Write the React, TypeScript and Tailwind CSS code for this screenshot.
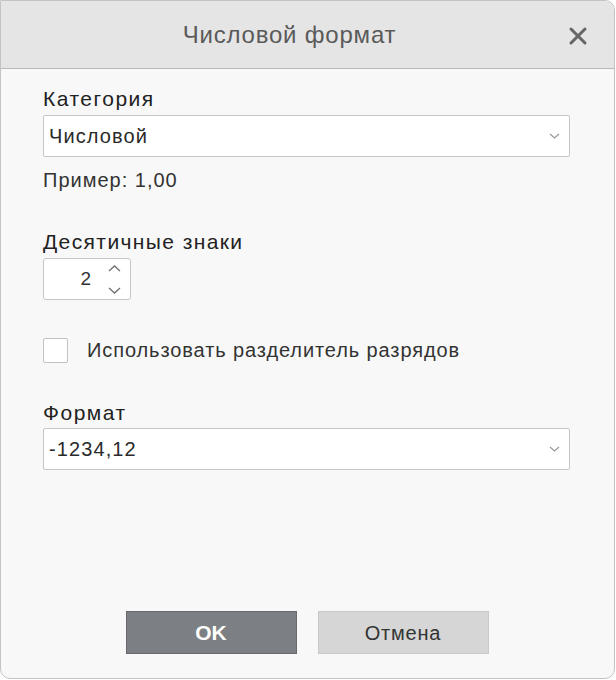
import { X } from "lucide-react";

const font = { fontFamily: '"Liberation Sans", Arial, sans-serif' };

function Chevron({ up = false, w = 10, h = 6, color = "#9a9a9a" }: { up?: boolean; w?: number; h?: number; color?: string }) {
  return (
    <svg width={w} height={h} viewBox={`0 0 ${w} ${h}`} fill="none" style={{ display: "block" }}>
      <path
        d={up ? `M1 ${h - 1}L${w / 2} 1L${w - 1} ${h - 1}` : `M1 1L${w / 2} ${h - 1}L${w - 1} 1`}
        stroke={color}
        strokeWidth="1.3"
      />
    </svg>
  );
}

function SelectBox({ value }: { value: string }) {
  return (
    <div className="flex h-[42px] w-[527px] items-center justify-between rounded-[2px] border border-[#c6c6c6] bg-white pl-[5px] pr-[9px]">
      <span className="text-[20px] tracking-[1.1px] text-[#2a2a2a]">{value}</span>
      <Chevron w={11} h={6} />
    </div>
  );
}

export default function App() {
  return (
    <div className="h-[680px] w-[616px] bg-white" style={font}>
      <div className="flex h-[679px] w-[615px] flex-col overflow-hidden rounded-b-[10px] rounded-tr-[10px] border border-[#c4c4c4] bg-[#f8f8f8]">
        {/* header */}
        <div className="relative flex h-[68px] shrink-0 items-center justify-center border-b border-[#b9b9b9] bg-[#e5e5e5] pr-[36px]">
          <span className="text-[24px] tracking-[0.8px] text-[#5a5a5a]">Числовой формат</span>
          <X size={28} strokeWidth={2.6} className="absolute right-[22px] top-[21px] text-[#666]" />
        </div>

        {/* body */}
        <div className="flex flex-1 flex-col pl-[42px] pt-[18px]">
          <div className="text-[21px] leading-[23px] tracking-[1.5px] text-[#222]">Категория</div>
          <div className="mt-[5px]">
            <SelectBox value="Числовой" />
          </div>
          <div className="mt-[12px] text-[20px] leading-[23px] tracking-[1px] text-[#333]">Пример: 1,00</div>

          <div className="mt-[38px] text-[21px] leading-[23px] tracking-[1.4px] text-[#222]">Десятичные знаки</div>
          <div className="mt-[5px] flex h-[42px] w-[88px] items-center justify-end rounded-[3px] border border-[#c6c6c6] bg-white pr-[9px]">
            <span className="mr-[17px] text-[19px] text-[#333]">2</span>
            <div className="flex flex-col items-center gap-[15px]">
              <Chevron up w={13} h={7} color="#707070" />
              <Chevron w={13} h={7} color="#707070" />
            </div>
          </div>

          <div className="mt-[35px] flex items-center">
            <div className="h-[25px] w-[25px] rounded-[2px] border border-[#c2c2c2] bg-white" />
            <span className="ml-[19px] text-[20px] tracking-[0.9px] text-[#333]">Использовать разделитель разрядов</span>
          </div>

          <div className="mt-[36px] text-[21px] leading-[23px] tracking-[1.5px] text-[#222]">Формат</div>
          <div className="mt-[4px]">
            <SelectBox value="-1234,12" />
          </div>
        </div>

        {/* footer */}
        <div className="flex h-[67px] shrink-0 justify-center gap-[21px] pr-[1px]">
          <button className="h-[43px] w-[171px] border border-[#67696c] bg-[#7c7f83] text-[21px] font-bold text-white">
            OK
          </button>
          <button className="h-[43px] w-[171px] border border-[#c9c9c9] bg-[#d6d6d6] text-[20px] tracking-[0.8px] text-[#333]">
            Отмена
          </button>
        </div>
      </div>
    </div>
  );
}
